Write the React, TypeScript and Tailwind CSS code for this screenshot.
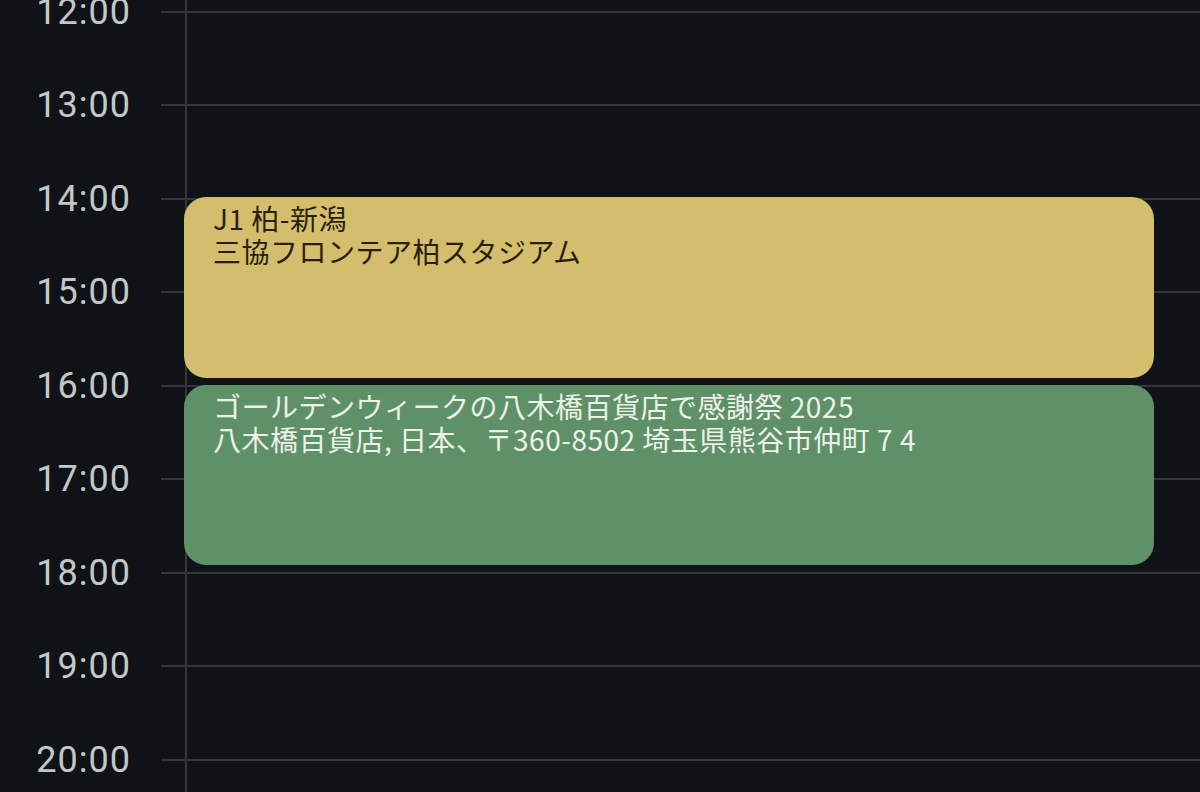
const hours = ['12:00', '13:00', '14:00', '15:00', '16:00', '17:00', '18:00', '19:00', '20:00', '21:00']

const events = [
  {
    title: 'J1 柏-新潟',
    place: '三協フロンテア柏スタジアム',
    box: 'top-[197px] h-[181px] bg-[#d4be6d] text-[#2a1f0c]',
  },
  {
    title: 'ゴールデンウィークの八木橋百貨店で感謝祭 2025',
    place: '八木橋百貨店, 日本、〒360-8502 埼玉県熊谷市仲町 7 4',
    box: 'top-[385px] h-[180px] bg-[#5e9168] text-[#eef1e8]',
  },
]

export default function App() {
  return (
    <div className="relative h-[792px] w-[1200px] overflow-hidden bg-[#0f1317] font-['Roboto','Noto_Sans_CJK_JP',sans-serif]">
      <div className="-mt-[35.25px]">
        {hours.map((h) => (
          <div key={h} className="flex h-[93.5px] items-center">
            <div className="w-[161px] pr-[30px] text-right text-[36px] leading-none tracking-[1px] text-[#c4c7c5]">{h}</div>
            <div className="h-[2px] flex-1 bg-[#33373b]" />
          </div>
        ))}
      </div>

      {/* day column divider */}
      <div className="absolute top-0 bottom-0 left-[185px] w-[2px] bg-[#33373b]" />

      {events.map((e) => (
        <div
          key={e.title}
          className={`absolute left-[184px] w-[970px] rounded-[22px] px-[29px] pt-[5px] text-[28px] leading-[33px] tracking-[0.5px] font-['Noto_Sans_CJK_JP',sans-serif] ${e.box}`}
        >
          <p>{e.title}</p>
          <p>{e.place}</p>
        </div>
      ))}
    </div>
  )
}
